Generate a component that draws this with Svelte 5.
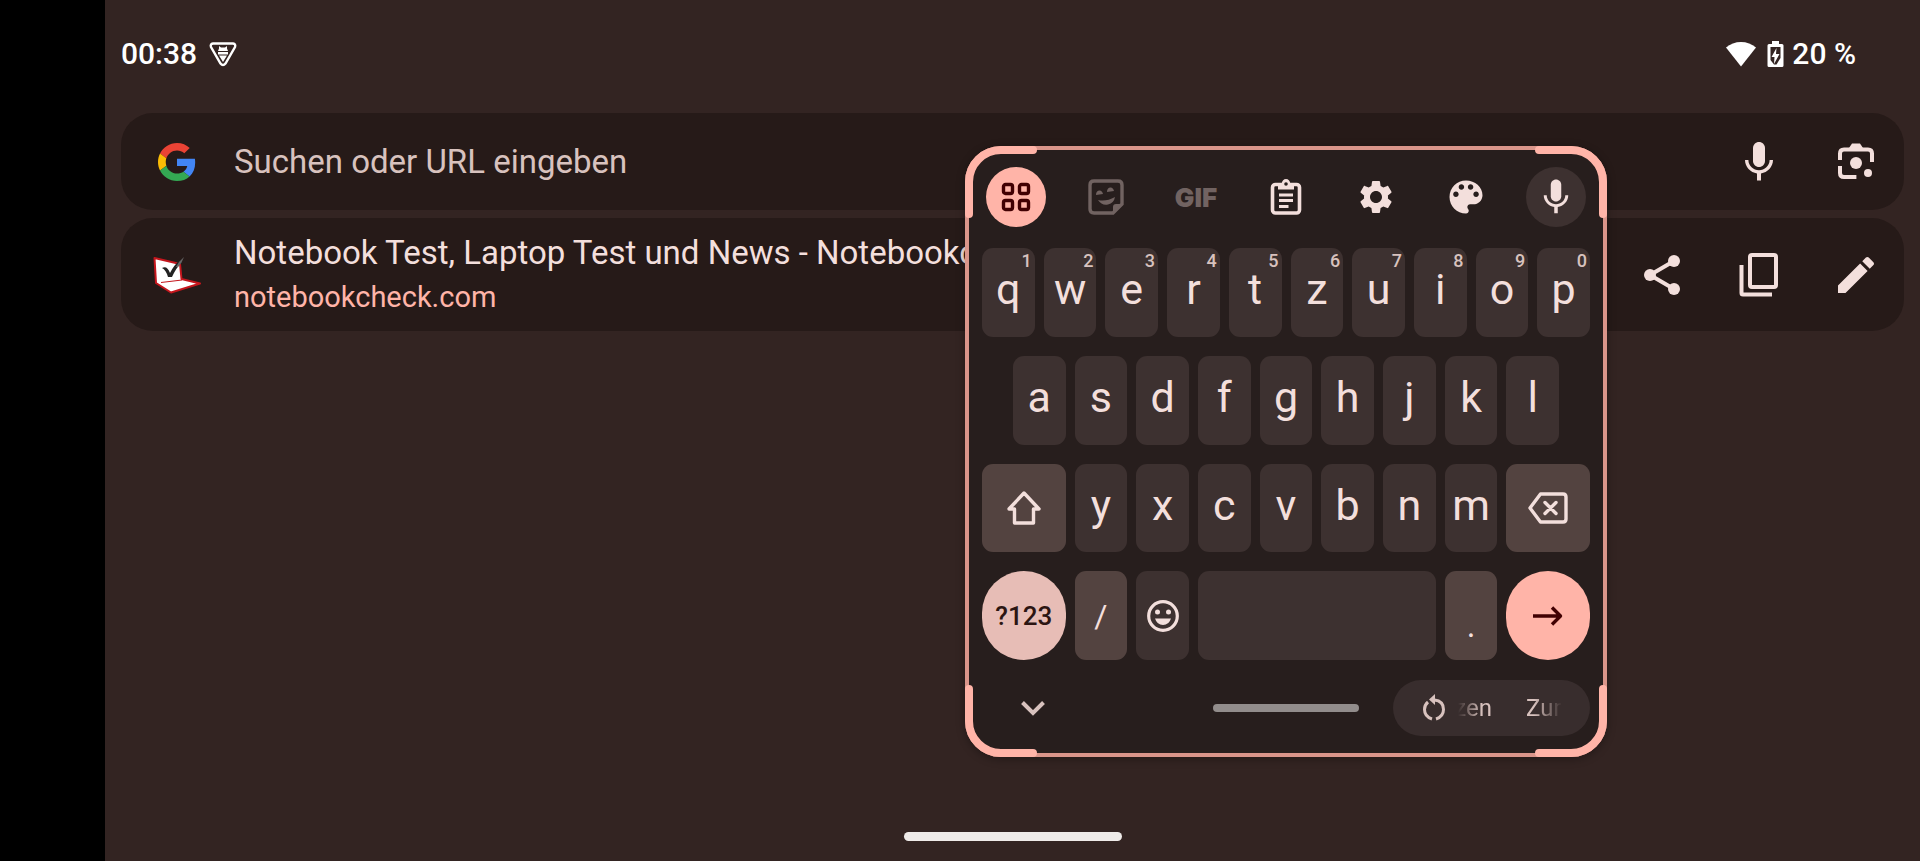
<script>
    let query = $state('');

    const topRow = [...'qwertzuiop'].map((letter, i) => ({ letter, hint: (i + 1) % 10 }));
    const homeRow = [...'asdfghjkl'];
    const lowerRow = [...'yxcvbnm'];
    const corners = ['top-left', 'top-right', 'bottom-right', 'bottom-left'];

    const type = (char) => (query += char);
    const erase = () => (query = query.slice(0, -1));
</script>

{#snippet mic()}
    <path d="M12 14.5c1.66 0 3-1.34 3-3V5c0-1.66-1.34-3-3-3S9 3.34 9 5v6.5c0 1.66 1.34 3 3 3z" />
    <path d="M17.3 11c0 3-2.54 5.1-5.3 5.1S6.7 14 6.7 11H5c0 3.41 2.72 6.23 6 6.72V21.300h2v-3.580c3.280-.480 6-3.300 6-6.720h-1.700z" />
{/snippet}

<div class="device">
    <div class="cutout"></div>

    <main class="screen">
        <header class="status">
            <time>00:38</time>
            <svg class="bee" width="28" height="26" viewBox="0 0 28 26" aria-hidden="true">
                <path d="M4 2.500h20q3 .5 2 3.500l-9.500 16.500q-2.500 3-5 0L2 6q-1-3 2-3.500z" fill="none" stroke="#fff" stroke-width="2.400" />
                <path d="M10 5l2 1.500h4L18 5v2.500l1 2.500H9l1-2.500zM9 11h10v2.500H9zM10 14.500h8L14 21z" fill="#fff" />
            </svg>
            <svg class="wifi" width="30" height="26" viewBox="0 0 30 26" aria-hidden="true">
                <path d="M0 6.500C8-1 22-1 30 6.500L15 25.500z" fill="#fff" />
            </svg>
            <svg width="17" height="27" viewBox="0 0 17 27" aria-hidden="true">
                <path d="M5 0h7v3h3q1.500 0 1.500 1.500v20Q16.500 26 15 26H2Q.5 26 .5 24.500v-20Q.5 3 2 3h3z" fill="#fff" />
                <path d="M3.500 6h10v11l-4 6.500H7L3.500 19z" fill="#332422" />
                <path d="M9.500 7L4.500 16h3L7 23l5.500-10H9z" fill="#fff" />
            </svg>
            <span>20 %</span>
        </header>

        <form class="row search" onsubmit={(e) => e.preventDefault()}>
            <span class="lead">
                <svg width="38" height="38" viewBox="0 0 48 48" aria-hidden="true">
                    <path fill="#ea4335" d="M24 9.500c3.540 0 6.710 1.220 9.210 3.600l6.850-6.850C35.900 2.380 30.470 0 24 0 14.620 0 6.510 5.380 2.560 13.220l7.980 6.190C12.430 13.720 17.740 9.500 24 9.500z" />
                    <path fill="#4285f4" d="M46.980 24.550c0-1.570-.15-3.090-.38-4.550H24v9.020h12.940c-.58 2.960-2.260 5.480-4.780 7.180l7.730 6c4.510-4.180 7.090-10.360 7.090-17.650z" />
                    <path fill="#fbbc05" d="M10.530 28.590c-.48-1.450-.76-2.990-.76-4.590s.27-3.140.76-4.590l-7.980-6.190C.92 16.460 0 20.120 0 24s.92 7.540 2.560 10.780l7.970-6.190z" />
                    <path fill="#34a853" d="M24 48c6.480 0 11.930-2.130 15.890-5.810l-7.730-6c-2.150 1.450-4.920 2.300-8.160 2.300-6.260 0-11.570-4.220-13.470-9.910l-7.980 6.190C6.510 42.620 14.620 48 24 48z" />
                </svg>
            </span>
            <input type="text" bind:value={query} placeholder="Suchen oder URL eingeben" aria-label="Suchen oder URL eingeben" />
            <button type="button" class="action" aria-label="Sprachsuche">
                <svg width="48" height="48" viewBox="0 0 24 24">{@render mic()}</svg>
            </button>
            <button type="button" class="action" aria-label="Google Lens">
                <svg width="48" height="48" viewBox="0 0 24 24">
                    <path d="M4 11V7.800q0-2 2-2h12q2 0 2 2V12M4 14v3.500q0 2 2 2h6.200" fill="none" stroke="currentColor" stroke-width="2" />
                    <path d="M8.500 5L10 2.700h4L15.500 5z" />
                    <circle cx="12" cy="12.500" r="3" />
                    <circle cx="18" cy="17.500" r="2" />
                </svg>
            </button>
        </form>

        <section class="row page">
            <span class="lead">
                <svg width="48" height="38" viewBox="0 0 48 38" aria-hidden="true">
                    <path d="M1.500 2L27 8l1.500 15L47 27.500 18 36.500 3 27z" fill="#fff" stroke="#c5161d" stroke-width="2" stroke-linejoin="round" />
                    <path d="M8 26.500l21-2.500" stroke="#c5161d" stroke-width="1" />
                    <path d="M9 12q5-3 8 5 4-8 9-12l3 1q-6 6-10 15h-4q-2-7-6-9z" fill="#222" />
                    <path d="M23 11q3-6 8-10-2 6-6 10z" fill="#666" />
                </svg>
            </span>
            <div class="page-text">
                <h1>Notebook Test, Laptop Test und News - Notebookc</h1>
                <a href="#notebookcheck">notebookcheck.com</a>
            </div>
            <button type="button" class="action" aria-label="Teilen">
                <svg width="48" height="48" viewBox="0 0 24 24">
                    <path d="M18 5L6 12l12 7" fill="none" stroke="currentColor" stroke-width="2" />
                    <circle cx="18" cy="5" r="3" /><circle cx="6" cy="12" r="3" /><circle cx="18" cy="19" r="3" />
                </svg>
            </button>
            <button type="button" class="action" aria-label="Link kopieren">
                <svg width="48" height="48" viewBox="0 0 48 48">
                    <g fill="none" stroke="currentColor" stroke-width="4">
                        <rect x="15" y="4" width="26" height="32" rx="2" />
                        <path d="M6.500 14v28q0 1.500 1.500 1.500h29" />
                    </g>
                </svg>
            </button>
            <button type="button" class="action" aria-label="Bearbeiten">
                <svg width="48" height="48" viewBox="0 0 24 24">
                    <path d="M3 17.250V21h3.750L17.810 9.940l-3.750-3.750L3 17.250zM20.710 7.040c.39-.39.39-1.020 0-1.410l-2.340-2.340c-.39-.39-1.020-.39-1.410 0l-1.830 1.830 3.750 3.750 1.830-1.830z" />
                </svg>
            </button>
        </section>

        <section class="keyboard" aria-label="Tastatur">
            {#each corners as corner}
                <svg class="corner {corner}" width="72" height="72" viewBox="0 0 72 72" aria-hidden="true">
                    <path d="M4 68V36A32 32 0 0 1 36 4H68" />
                </svg>
            {/each}

            <div class="tools">
                <button class="tool active" aria-label="Alle Funktionen">
                    <svg class="line" width="32" height="32" viewBox="0 0 32 32">
                        <rect x="3.500" y="3.500" width="9" height="9" rx="2" />
                        <rect x="19.500" y="3.500" width="9" height="9" rx="2" />
                        <rect x="3.500" y="19.500" width="9" height="9" rx="2" />
                        <rect x="19.500" y="19.500" width="9" height="9" rx="2" />
                    </svg>
                </button>
                <button class="tool dim" aria-label="Sticker">
                    <svg width="36" height="36" viewBox="0 0 36 36">
                        <path d="M6 2h24q4 0 4 4v19l-9 9H6q-4 0-4-4V6q0-4 4-4z" fill="none" stroke="currentColor" stroke-width="3.400" />
                        <path d="M25 34v-6q0-3 3-3h6z" />
                        <path d="M8 16q0-4 3-4.500t4 3.500zM19 13q0-4 3-4.500t4 3.500zM10 21q8 2 17-3-1 6-7 7.500T10 21z" />
                    </svg>
                </button>
                <button class="tool dim gif">GIF</button>
                <button class="tool" aria-label="Zwischenablage">
                    <svg width="32" height="38" viewBox="0 0 32 38">
                        <rect x="2.500" y="6.500" width="27" height="28.500" rx="3" fill="none" stroke="currentColor" stroke-width="3.600" />
                        <path d="M8 6h3.500q1-5 4.500-5t4.500 5H24v5.500H8z" />
                        <circle cx="16" cy="6" r="1.800" fill="#271e1d" />
                        <path d="M9 17h14M9 22.500h14M9 28.500h9.500" stroke="currentColor" stroke-width="3" />
                    </svg>
                </button>
                <button class="tool" aria-label="Einstellungen">
                    <svg width="40" height="40" viewBox="0 0 24 24">
                        <path d="M19.140 12.940c.04-.3.060-.61.060-.94 0-.32-.02-.64-.07-.94l2.030-1.580c.18-.14.230-.41.120-.61l-1.920-3.320c-.12-.22-.37-.29-.59-.22l-2.390.96c-.5-.38-1.030-.7-1.620-.94l-.36-2.540c-.04-.24-.24-.41-.48-.41h-3.840c-.24 0-.43.17-.47.410l-.36 2.540c-.59.240-1.130.57-1.620.940l-2.390-.96c-.22-.08-.47 0-.59.220L2.740 8.870c-.12.210-.08.470.12.610l2.030 1.580c-.05.300-.09.630-.09.940s.02.640.070.940l-2.030 1.580c-.18.140-.23.410-.12.610l1.920 3.320c.12.220.37.290.59.220l2.390-.96c.5.380 1.030.7 1.620.940l.36 2.540c.05.240.24.410.480.410h3.840c.24 0 .44-.17.470-.41l.36-2.540c.59-.24 1.130-.56 1.620-.94l2.390.960c.22.080.47 0 .59-.22l1.920-3.320c.12-.22.070-.47-.12-.61l-2.010-1.580zM12 15.600c-1.980 0-3.600-1.620-3.600-3.600s1.620-3.600 3.600-3.600 3.600 1.620 3.600 3.600-1.620 3.600-3.600 3.600z" />
                    </svg>
                </button>
                <button class="tool" aria-label="Design">
                    <svg width="44" height="44" viewBox="0 0 24 24">
                        <path d="M12 3c-4.970 0-9 4.030-9 9s4.030 9 9 9c.83 0 1.500-.67 1.500-1.500 0-.39-.15-.74-.39-1.010-.23-.26-.38-.61-.38-.99 0-.83.670-1.500 1.500-1.500H16c2.760 0 5-2.240 5-5 0-4.420-4.030-8-9-8zm-5.500 9c-.83 0-1.500-.67-1.500-1.500S5.670 9 6.500 9 8 9.670 8 10.500 7.330 12 6.500 12zm3-4C8.670 8 8 7.330 8 6.500S8.670 5 9.500 5s1.500.67 1.500 1.500S10.330 8 9.500 8zm5 0c-.83 0-1.500-.67-1.500-1.500S13.670 5 14.500 5s1.500.67 1.500 1.500S15.330 8 14.500 8zm3 4c-.83 0-1.500-.67-1.500-1.500S16.670 9 17.500 9s1.500.67 1.500 1.500-.67 1.500-1.500 1.500z" />
                    </svg>
                </button>
                <button class="tool filled" aria-label="Spracheingabe">
                    <svg width="42" height="42" viewBox="0 0 24 24">{@render mic()}</svg>
                </button>
            </div>

            <div class="keys">
                <div class="key-row">
                    {#each topRow as { letter, hint }}
                        <button class="key letter" onclick={() => type(letter)}>{letter}<sup>{hint}</sup></button>
                    {/each}
                </div>
                <div class="key-row home">
                    {#each homeRow as letter}
                        <button class="key letter" onclick={() => type(letter)}>{letter}</button>
                    {/each}
                </div>
                <div class="key-row">
                    <button class="key wide mod" aria-label="Umschalt">
                        <svg class="line" width="36" height="36" viewBox="0 0 36 36">
                            <path d="M18 3L33 19h-5.500v14h-19V19H3z" />
                        </svg>
                    </button>
                    {#each lowerRow as letter}
                        <button class="key letter" onclick={() => type(letter)}>{letter}</button>
                    {/each}
                    <button class="key wide mod" aria-label="Löschen" onclick={erase}>
                        <svg class="line" width="40" height="32" viewBox="0 0 40 32">
                            <path d="M12.500 2H35q3 0 3 3v22q0 3-3 3H12.500L2 16z" />
                            <path d="M17 10.500l11 11M28 10.500l-11 11" stroke-linecap="round" />
                        </svg>
                    </button>
                </div>
                <div class="key-row">
                    <button class="key wide symbols">?123</button>
                    <button class="key mod slash" onclick={() => type('/')}>/</button>
                    <button class="key" aria-label="Emoji">
                        <svg width="32" height="32" viewBox="0 0 32 32">
                            <circle cx="16" cy="16" r="14.300" fill="none" stroke="currentColor" stroke-width="3.200" />
                            <circle cx="10.500" cy="12" r="2.500" /><circle cx="21.500" cy="12" r="2.500" />
                            <path d="M8 18.500h16q-2 6.500-8 6.500t-8-6.500z" />
                        </svg>
                    </button>
                    <button class="key space" aria-label="Leertaste" onclick={() => type(' ')}></button>
                    <button class="key mod dot" onclick={() => type('.')}>.</button>
                    <button class="key wide enter" aria-label="Öffnen">
                        <svg class="line" width="32" height="22" viewBox="0 0 32 22">
                            <path d="M1 11h27M20 2.500l8.500 8.500-8.500 8.500" />
                        </svg>
                    </button>
                </div>
            </div>

            <div class="dock">
                <button class="hide" aria-label="Tastatur ausblenden">
                    <svg width="26" height="16" viewBox="0 0 26 16">
                        <path d="M2.500 2.500L13 13 23.500 2.500" fill="none" stroke="currentColor" stroke-width="4" />
                    </svg>
                </button>
                <div class="grip"></div>
                <button class="reset" aria-label="Zurücksetzen">
                    <svg width="26" height="28" viewBox="0 0 26 28">
                        <path d="M7 8Q3.500 11 3.500 15.500 3.500 22.500 11 25M15 25q7.500-2.500 7.500-9.500 0-8.500-9-9.500H11" fill="none" stroke="currentColor" stroke-width="3" />
                        <path d="M8 5.500L14 0v11z" />
                    </svg>
                    <span class="ticker">
                        <span class="tail">Zurücksetzen</span>
                        <span>Zurücksetzen</span>
                    </span>
                </button>
            </div>
        </section>

        <div class="home-bar"></div>
    </main>
</div>

<style>
    :global(body) {
        background: #000;
    }

    .device {
        display: flex;
        min-height: 100vh;
        font-family: Roboto, "Open Sans", sans-serif;
        color: #f3dfdc;
    }

    .cutout {
        flex: 0 0 105px;
        background: #000;
    }

    .screen {
        position: relative;
        flex: 1;
        min-width: 0;
        display: flex;
        flex-direction: column;
        padding: 0 16px;
        background: #332422;
    }

    button {
        padding: 0;
        border: 0;
        background: none;
        color: inherit;
        font: inherit;
        cursor: pointer;
    }

    svg {
        display: block;
        fill: currentColor;
    }

    .line {
        fill: none;
        stroke: currentColor;
        stroke-width: 3.4;
        stroke-linejoin: round;
    }

    .status {
        display: flex;
        align-items: center;
        height: 32px;
        padding: 38px 48px 43px 0;
        font-size: 30px;
        font-weight: 500;
        line-height: 32px;
        color: #fff;
    }

    .bee {
        margin-left: 12px;
    }

    .wifi {
        margin: 0 11px 0 auto;
    }

    .status span {
        margin-left: 8px;
    }

    .row {
        display: flex;
        align-items: center;
        margin-bottom: 8px;
        padding: 0 24px 0 32px;
        border-radius: 32px;
        background: #261a18;
    }

    .search {
        height: 97px;
    }

    .page {
        height: 113px;
    }

    .lead {
        flex: 0 0 48px;
        display: grid;
        place-items: center;
        margin-right: 33px;
    }

    input {
        flex: 1;
        min-width: 0;
        padding: 0;
        border: 0;
        outline: 0;
        background: none;
        color: inherit;
        font: inherit;
        font-size: 33px;
        line-height: 40px;
    }

    input::placeholder {
        color: #d8c2be;
        opacity: 1;
    }

    .action {
        flex: none;
        margin-left: 49px;
    }

    .page-text {
        flex: 1;
        min-width: 0;
    }

    h1 {
        margin: 0;
        overflow: hidden;
        font-size: 33px;
        font-weight: 400;
        line-height: 44px;
        text-overflow: ellipsis;
        white-space: nowrap;
    }

    a {
        display: block;
        font-size: 29px;
        line-height: 44px;
        color: #ffb4a8;
        text-decoration: none;
    }

    .keyboard {
        position: absolute;
        top: 146px;
        right: 313px;
        box-sizing: border-box;
        width: 642px;
        padding: 17px 13px;
        border: 4px solid #da958a;
        border-radius: 36px;
        background: #271e1d;
        box-shadow: 0 2px 10px #0005;
    }

    .corner {
        position: absolute;
        fill: none;
        stroke: #ffb4a8;
        stroke-width: 8;
        stroke-linecap: round;
        pointer-events: none;
    }

    .top-left {
        top: -4px;
        left: -4px;
    }

    .top-right {
        top: -4px;
        right: -4px;
        transform: rotate(90deg);
    }

    .bottom-right {
        bottom: -4px;
        right: -4px;
        transform: rotate(180deg);
    }

    .bottom-left {
        bottom: -4px;
        left: -4px;
        transform: rotate(270deg);
    }

    .tools {
        display: flex;
        justify-content: space-between;
        padding: 0 4px;
    }

    .tool {
        display: grid;
        place-items: center;
        width: 60px;
        height: 60px;
        border-radius: 50%;
    }

    .tool.active {
        background: #ffb4a8;
        color: #410002;
    }

    .tool.dim {
        color: #716361;
    }

    .tool.filled {
        background: #3d3130;
    }

    .gif {
        font-family: Inter, Roboto, sans-serif;
        font-size: 26px;
        font-weight: 900;
    }

    .keys {
        display: grid;
        grid-template-rows: repeat(4, 1fr);
        gap: 19px;
        height: 412px;
        margin: 21px 0 20px;
    }

    .key-row {
        display: grid;
        grid-template-columns: repeat(20, 1fr);
        column-gap: 9px;
    }

    .home .key:first-child {
        grid-column-start: 2;
    }

    .key {
        position: relative;
        grid-column-end: span 2;
        display: grid;
        place-items: center;
        border-radius: 11px;
        background: #3d3130;
    }

    .letter {
        padding-bottom: 6px;
        font-size: 43px;
        line-height: 52px;
    }

    sup {
        position: absolute;
        top: 3px;
        right: 3px;
        font-size: 18px;
        font-weight: 500;
        line-height: 20px;
        color: #d8c2be;
    }

    .wide {
        grid-column-end: span 3;
    }

    .space {
        grid-column-end: span 8;
    }

    .mod {
        background: #534340;
    }

    .symbols {
        border-radius: 42px;
        background: #e7bdb6;
        color: #2c1512;
        font-size: 26px;
        font-weight: 500;
    }

    .slash {
        font-size: 32px;
    }

    .dot {
        padding-top: 20px;
        font-size: 33px;
    }

    .enter {
        border-radius: 42px;
        background: #ffb4a8;
        color: #410002;
    }

    .dock {
        display: grid;
        grid-template-columns: 1fr auto 1fr;
        align-items: center;
        color: #d8c2be;
    }

    .hide {
        justify-self: start;
        padding: 12px 38px;
    }

    .grip {
        width: 146px;
        height: 8px;
        border-radius: 4px;
        background: #928d8c;
    }

    .reset {
        justify-self: end;
        display: flex;
        align-items: center;
        box-sizing: border-box;
        width: 197px;
        height: 56px;
        padding-left: 28px;
        border-radius: 28px;
        background: #382d2d;
        font-size: 24px;
    }

    .ticker {
        display: grid;
        grid-template-columns: 34px 36px;
        gap: 34px;
        margin-left: 11px;
        mask-image: linear-gradient(90deg, transparent, #000 24px, #000 76px, transparent);
    }

    .ticker span {
        display: flex;
        overflow: hidden;
    }

    .ticker .tail {
        justify-content: flex-end;
    }

    .home-bar {
        width: 218px;
        height: 9px;
        margin: auto auto 20px;
        border-radius: 5px;
        background: #efebe9;
    }
</style>
